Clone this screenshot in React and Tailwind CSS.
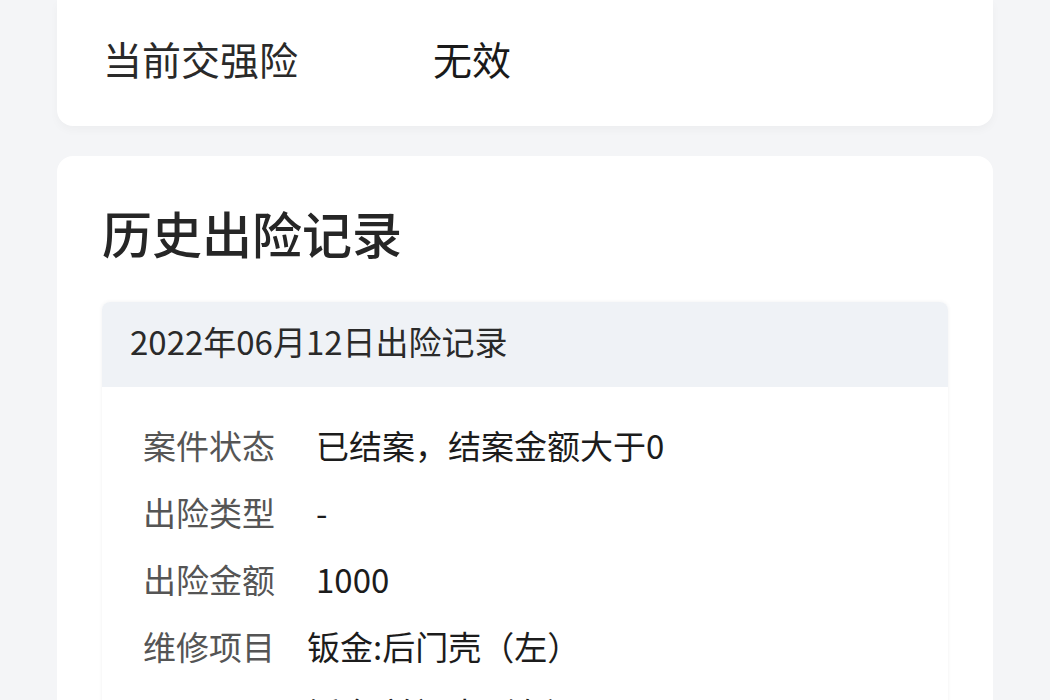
import React from 'react';

const records = [
  { label: '案件状态', value: '已结案，结案金额大于0' },
  { label: '出险类型', value: '-' },
  { label: '出险金额', value: '1000' },
  { label: '维修项目', value: '钣金:后门壳（左）', shift: true },
  { label: '', value: '钣金:前门壳（左）', shift: true },
];

const font = { fontFamily: '"Noto Sans CJK SC", "Noto Sans", sans-serif' };

export default function App() {
  return (
    <div className="h-[700px] w-[1050px] overflow-hidden bg-[#f4f5f7] px-[57px]" style={font}>
      {/* current compulsory insurance */}
      <div className="flex h-[126px] items-start rounded-b-2xl bg-white pl-[46px] pt-[33px] shadow-[0_4px_10px_rgba(0,0,0,0.03)]">
        <span className="w-[330px] text-[39px] leading-[50px] text-[#2a2a2a]">当前交强险</span>
        <span className="text-[39px] leading-[50px] text-[#1a1a1a]">无效</span>
      </div>

      {/* history */}
      <div className="mt-[30px] rounded-2xl bg-white px-[45px] pt-[46px]">
        <h2 className="text-[50px] font-medium leading-[60px] text-[#262626]">历史出险记录</h2>

        <div className="mt-[40px] overflow-hidden rounded-lg bg-white shadow-[0_0_4px_rgba(0,0,0,0.06)]">
          <div className="flex h-[85px] items-center bg-[#eff2f6] pb-[6px] pl-[28px] text-[33px] text-[#2a2a2a]">
            2022年06月12日出险记录
          </div>
          <div className="pl-[41px] pt-[25px]">
            {records.map((r, i) => (
              <div key={i} className="flex h-[67px] items-center text-[33px]">
                <span className={`shrink-0 text-[#555] ${r.shift ? 'w-[164px]' : 'w-[173px]'}`}>{r.label}</span>
                <span className="text-[#1c1c1c]">{r.value}</span>
              </div>
            ))}
          </div>
        </div>
      </div>
    </div>
  );
}
